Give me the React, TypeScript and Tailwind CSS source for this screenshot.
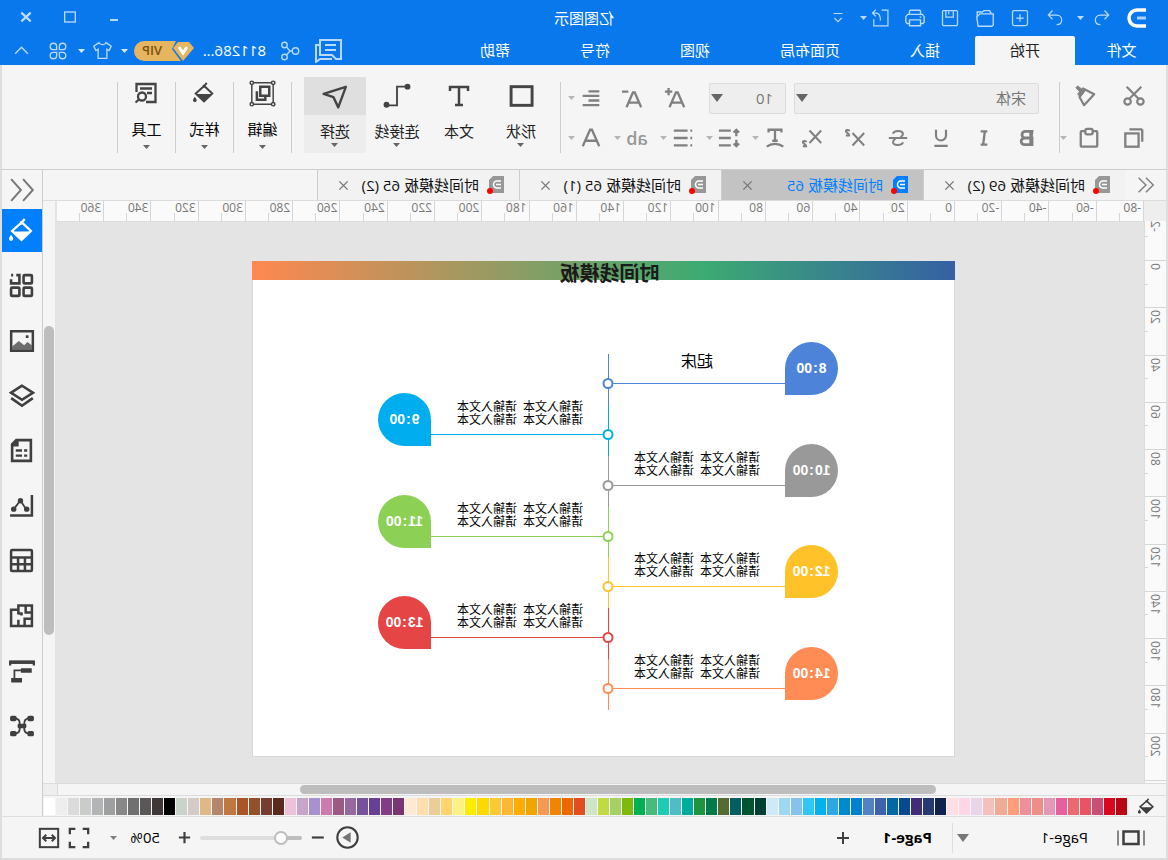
import { useState } from 'react';
import type { ReactNode } from 'react';

interface IconProps {
  size?: number;
  stroke?: number;
  className?: string;
  children: ReactNode;
}

function Icon({ size = 20, stroke = 1.5, className = '', children }: IconProps) {
  return (
    <svg
      width={size}
      height={size}
      viewBox="0 0 24 24"
      fill="none"
      stroke="currentColor"
      strokeWidth={stroke}
      className={`shrink-0 ${className}`}
      aria-hidden="true"
    >
      {children}
    </svg>
  );
}

function Caret({ className = '', big = false }: { className?: string; big?: boolean }) {
  return (
    <svg width={big ? 12 : 7} height={big ? 8 : 4} viewBox="0 0 12 8" preserveAspectRatio="none" className={`shrink-0 ${className}`} aria-hidden="true">
      <path d="M0 0h12L6 8z" fill="currentColor" />
    </svg>
  );
}

const FillIcon = ({ size = 22, className = '' }: { size?: number; className?: string }) => (
  <Icon size={size} stroke={2.2} className={className}>
    <path d="M9 1l4 5M12 4L3 12.500 12 21 21 12.500 11 3.500z" />
    <path d="M3.500 13h17L12 21.500z" fill="currentColor" stroke="none" />
    <path d="M22 16c1.500 2 2 3 2 4a2 2 0 01-4 0c0-1 .5-2 2-4z" fill="currentColor" stroke="none" />
  </Icon>
);

const quickIcons = [
  {
    label: '新建',
    icon: (
      <Icon>
        <rect x="3" y="3" width="18" height="18" rx="2" />
        <path d="M12 7.500v9M7.500 12h9" />
      </Icon>
    ),
  },
  {
    label: '打开',
    icon: (
      <Icon size={22}>
        <path d="M3 7.500h14.500L21 11l-1.500 10H4.500L3 19.500zM5 7.500l2-3.500h6l2 1.500h5.500V10" />
      </Icon>
    ),
  },
  {
    label: '保存',
    icon: (
      <Icon>
        <path d="M4 3h16l1 1v16l-1 1H4l-1-1V4zM8 3v8h9V3M13.500 4.500v3" />
      </Icon>
    ),
  },
  {
    label: '打印',
    icon: (
      <Icon size={22}>
        <path d="M6 8V4.500L7 3.500h10l1 1V8M6 18H3.500L2 16.500v-6L4 8h16l2 2.500v6L20.500 18H18M6 14h12v6.500H6zM5 11h2" />
      </Icon>
    ),
  },
  {
    label: '导出',
    icon: (
      <Icon>
        <path d="M10 2.500H2.500v19h17v-8M20.500 6h-4c-4 0-5 4-5 9M17 2l4 4-4 4" />
      </Icon>
    ),
  },
];

const menus = ['插入', '页面布局', '视图', '符号', '帮助'];

function TitleBar() {
  const light = 'flex items-center justify-center text-[#b9d9ff]';
  return (
    <header className="bg-[#0878ec] text-white">
      <div className="flex h-9 items-center">
        <div className="flex flex-1 items-center pl-1">
          <span className="flex w-11 justify-center pl-2.5">
            <svg width="20" height="20" viewBox="0 0 20 20" fill="none" aria-hidden="true">
              <path d="M1 2h9a8 8 0 010 16H1" stroke="#fff" strokeWidth="3.500" />
              <path d="M1 10h9" stroke="#a9d0ff" strokeWidth="3" />
            </svg>
          </span>
          <button type="button" aria-label="撤销" className={`${light} w-9`}>
            <Icon>
              <path d="M9 3L4 8.500l5 5M4 8.500h10c4 0 6 3 6 6s-2 5.500-6 5.500" />
            </Icon>
          </button>
          <Caret className="mr-1 text-[#b9d9ff]" />
          <button type="button" aria-label="重做" className={`${light} w-[35px]`}>
            <Icon>
              <path d="M15 3l5 5.500-5 5M20 8.500H10c-4 0-6 3-6 6S6 20 10 20" />
            </Icon>
          </button>
          {quickIcons.map((item) => (
            <button key={item.label} type="button" aria-label={item.label} className={`${light} w-[35px]`}>
              {item.icon}
            </button>
          ))}
          <Caret className="-ml-1 text-[#b9d9ff]" />
          <button type="button" aria-label="自定义" className={`${light} ml-1 w-9`}>
            <Icon size={18}>
              <path d="M6 6h12M7 12l5 5 5-5" />
            </Icon>
          </button>
        </div>
        <h1 className="text-[15px]">亿图图示</h1>
        <div className="flex flex-1 justify-end pr-1">
          <button type="button" aria-label="最小化" className={`${light} w-11`}>
            <Icon size={16} stroke={3}>
              <path d="M6 15h12" />
            </Icon>
          </button>
          <button type="button" aria-label="最大化" className={`${light} w-11`}>
            <Icon size={16} stroke={2}>
              <rect x="4" y="3" width="16" height="15" />
            </Icon>
          </button>
          <button type="button" aria-label="关闭" className={`${light} w-11`}>
            <Icon size={16} stroke={3.5}>
              <path d="M5 4l14 13M19 4L5 17" />
            </Icon>
          </button>
        </div>
      </div>
      <div className="flex h-[29px] items-stretch text-[15px]">
        <button type="button" className="w-[93px]">文件</button>
        <button type="button" className="rounded-t-xs bg-[#f5f5f5] px-[35px] text-[#222]">开始</button>
        {menus.map((menu) => (
          <button key={menu} type="button" className="px-[35px]">
            {menu}
          </button>
        ))}
        <div className="ml-auto flex items-center pr-2.5">
          <button type="button" aria-label="消息" className={`${light} w-10`}>
            <svg width="28" height="24" viewBox="0 0 28 24" fill="none" stroke="currentColor" strokeWidth="2" aria-hidden="true">
              <path d="M1 1h21v15H10l-4 4H1zM6 6h11M6 11h11" />
              <path d="M22 6h4v17l-4-3H10" />
            </svg>
          </button>
          <button type="button" aria-label="分享" className={`${light} w-9`}>
            <Icon size={22}>
              <circle cx="6" cy="12" r="3.500" />
              <circle cx="18" cy="5.500" r="3" />
              <circle cx="18" cy="18.500" r="3" />
              <path d="M9 12h3l4-4.500M12 12l4 4.500" />
            </Icon>
          </button>
          <span className="ml-1.5 w-[72px]">811286...</span>
          <span className="relative flex h-5 w-[60px] items-center justify-end">
            <svg width="60" height="20" viewBox="0 0 60 20" className="absolute inset-0" aria-hidden="true">
              <path d="M18 0h32a10 10 0 010 20H13l9-12z" fill="#e5b560" />
              <path d="M5 1h11l5 6-10 13L0 7z" fill="#e5b560" />
              <path d="M7 6l4 6 4-6" fill="none" stroke="#fff" strokeWidth="3" />
            </svg>
            <span className="relative mr-2 text-[13px] font-semibold text-[#7a5210]">VIP</span>
          </span>
          <Caret className="ml-1.5 text-[#d5e8ff]" />
          <button type="button" aria-label="皮肤" className={`${light} w-9`}>
            <Icon size={21}>
              <path d="M8 3L2 7l2.500 5L7 10.500V21h10V10.500l2.500 1.500L22 7l-6-4c-1 3-7 3-8 0z" />
            </Icon>
          </button>
          <Caret className="text-[#d5e8ff]" />
          <button type="button" aria-label="应用" className={`${light} w-10`}>
            <Icon size={22}>
              <path d="M10.500 10.500H7A3.500 3.500 0 1110.500 7zM13.500 10.500V7A3.500 3.500 0 1117 10.500zM10.500 13.500V17A3.500 3.500 0 117 13.500zM13.500 13.500H17A3.500 3.500 0 1113.500 17z" />
            </Icon>
          </button>
          <button type="button" aria-label="收起" className={`${light} ml-1 w-6`}>
            <Icon size={19} stroke={1.8}>
              <path d="M4 16l8-8 8 8" />
            </Icon>
          </button>
        </div>
      </div>
    </header>
  );
}

const Divider = () => <span className="mt-[17px] h-[71px] w-px shrink-0 bg-[#cdcdcd]" />;

const formatButtons = [
  { label: '加粗', stroke: 3.4, icon: <path d="M6 4h8a4 4 0 010 8H7zM6 12h9a4 4 0 010 8H6zM7.500 4v16" /> },
  { label: '斜体', stroke: 2.8, icon: <path d="M8 4h8M8 20h8M11 4l2 16" /> },
  { label: '下划线', stroke: 2.6, icon: <path d="M6 2v7a6 6 0 0012 0V2M4 21.500h16" /> },
  { label: '删除线', stroke: 2.4, icon: <path d="M18 7c-1-4-11-5-12 0 0 2 1 3 3 4M6 17c1 4 12 5 12 0 0-2-1-3-3-4M1 12h22" /> },
  { label: '上标', stroke: 2.4, icon: <path d="M1 6l14 15M15 6L1 21M19 4c0-2 4-2 4 0s-4 2-4 5h4" /> },
  { label: '下标', stroke: 2.4, icon: <path d="M1 3l14 15M15 3L1 18M19 17c0-2 4-2 4 0s-4 2-4 5h4" /> },
];

const paragraphButtons = [
  { label: '文字方向', icon: <path d="M5 6V3h14v3M12 3v12M9 15h6M3 21.500c5-4 13-4 18 0" /> },
  { label: '行距', icon: <path d="M4 3v7M1 6l3-3 3 3M4 14v7M1 18l3 3 3-3M10 4h13M10 12h13M10 20h13" /> },
  { label: '项目符号', icon: <path d="M2 4h2M2 12h2M2 20h2M7 4h15M7 12h15M7 20h15" /> },
  { label: '突出显示', text: 'ab' },
  { label: '字体颜色', icon: <path d="M3 21L11 3h2l8 18M6 15h12" /> },
];

const bigTools = [
  {
    label: '形状',
    caret: true,
    icon: (
      <Icon size={28} stroke={2.5}>
        <rect x="2.500" y="4" width="18" height="16" />
      </Icon>
    ),
  },
  {
    label: '文本',
    caret: false,
    icon: (
      <Icon size={24} stroke={2.5}>
        <path d="M3 7V3h18v4M12 3v18M8 21h8" />
      </Icon>
    ),
  },
  {
    label: '连接线',
    caret: true,
    icon: (
      <Icon size={28} stroke={1.6}>
        <path d="M3 4h9v16h9" />
        <circle cx="3" cy="4" r="2.500" fill="currentColor" stroke="none" />
        <circle cx="21" cy="19.500" r="2.500" fill="currentColor" stroke="none" />
      </Icon>
    ),
  },
  {
    label: '选择',
    caret: true,
    active: true,
    icon: (
      <Icon size={26} stroke={2.2}>
        <path d="M2 3.500L22.500 10l-9 3L9 22.500z" strokeLinejoin="round" />
      </Icon>
    ),
  },
];

const smallTools = [
  {
    label: '编辑',
    icon: (
      <Icon size={27} stroke={1.3}>
        <path d="M2.500 2.500h19v19h-19z" />
        <path d="M6 6h8v8H6zM17 10v7.500H9.500V14" strokeWidth="2.200" />
        <g fill="#f5f5f5">
          <circle cx="2.500" cy="2.500" r="1.500" />
          <circle cx="21.500" cy="2.500" r="1.500" />
          <circle cx="2.500" cy="21.500" r="1.500" />
          <circle cx="21.500" cy="21.500" r="1.500" />
        </g>
      </Icon>
    ),
  },
  { label: '样式', icon: <FillIcon size={22} /> },
  {
    label: '工具',
    icon: (
      <Icon size={24} stroke={2.3}>
        <path d="M21.500 11V3h-19v18H12M6 7.500h12M6 12h5" />
        <circle cx="16" cy="15.500" r="4" />
        <path d="M19 18.500l3.500 3" />
      </Icon>
    ),
  },
];

function Ribbon() {
  const [font, setFont] = useState('宋体');
  const [fontSize, setFontSize] = useState('10');
  const btn = 'flex h-8 items-center justify-center';

  return (
    <section className="flex min-h-[105px] items-start border-x-2 border-b border-x-[#dedede] border-b-[#cdcdcd] bg-[#f5f5f5] text-[#444]">
      <div className="mt-[17px] grid grid-cols-[44px_45px_7px] gap-y-2 pl-2.5 text-[#808080]">
        <button type="button" aria-label="剪切" className={btn}>
          <Icon size={22} stroke={2.4} className="-mt-1">
            <circle cx="5" cy="18" r="3.500" />
            <circle cx="19" cy="18" r="3.500" />
            <path d="M4 2l13 13M20 2L7 15" />
          </Icon>
        </button>
        <button type="button" aria-label="格式刷" className={`${btn} pl-2`}>
          <Icon size={22} stroke={2.4} className="-mt-1">
            <path d="M2 10l10-5 6 8-5 9z" strokeLinejoin="round" />
            <path d="M11 5l6 8 3-3-2-3 4-4-2-2-4 3-2-1z" fill="currentColor" strokeWidth="1" />
          </Icon>
        </button>
        <span />
        <button type="button" aria-label="复制" className={btn}>
          <Icon size={22} stroke={2.5}>
            <path d="M17 2.500H3M3 2.500V16" />
            <rect x="7" y="7" width="14.500" height="14.500" />
          </Icon>
        </button>
        <button type="button" aria-label="粘贴" className={btn}>
          <Icon size={22} stroke={2.5}>
            <rect x="3" y="4.500" width="18" height="17" rx="1" />
            <rect x="8" y="2" width="8" height="6" rx="2" fill="#f5f5f5" />
          </Icon>
        </button>
        <span className="flex items-center text-[#b5b5b5]"><Caret /></span>
      </div>
      <Divider />

      <div className="mt-[17px] flex flex-col gap-2 pl-2.5 text-[#808080]">
        <div className="flex items-center pl-2.5">
          <label className="relative mr-2 flex items-center">
            <select
              aria-label="字体"
              value={font}
              onChange={(e) => setFont(e.target.value)}
              className="h-[31px] w-[245px] appearance-none rounded-xs border border-[#dcdcdf] bg-[#eee] px-3 text-[15px] text-[#777]"
            >
              <option>宋体</option>
              <option>黑体</option>
            </select>
            <Caret big className="pointer-events-none absolute right-0.5 text-[#666]" />
          </label>
          <label className="relative flex items-center">
            <select
              aria-label="字号"
              value={fontSize}
              onChange={(e) => setFontSize(e.target.value)}
              className="h-[31px] w-[77px] appearance-none rounded-xs border border-[#dcdcdf] bg-[#eee] px-3 text-[15px] text-[#777]"
            >
              <option>10</option>
              <option>12</option>
            </select>
            <Caret big className="pointer-events-none absolute right-0.5 text-[#666]" />
          </label>
          <button type="button" aria-label="增大字号" className={`${btn} ml-3 w-[43px]`}>
            <Icon size={22} stroke={2.5}>
              <path d="M2 22L9 6h2l7 16M5 17h10M19 1v8M15 5h8" />
            </Icon>
          </button>
          <button type="button" aria-label="减小字号" className={`${btn} w-[43px]`}>
            <Icon size={22} stroke={2.5}>
              <path d="M2 22L9 6h2l7 16M5 17h10M16 5h7" />
            </Icon>
          </button>
          <button type="button" aria-label="对齐" className={`${btn} ml-1 w-8`}>
            <Icon size={20} stroke={2.8}>
              <path d="M2 4h13M2 9.500h20M2 15h13M2 20.500h20" />
            </Icon>
          </button>
          <Caret className="text-[#b5b5b5]" />
        </div>
        <div className="flex items-center">
          {formatButtons.map((b) => (
            <button key={b.label} type="button" aria-label={b.label} className={`${btn} w-[43px]`}>
              <Icon size={20} stroke={b.stroke}>{b.icon}</Icon>
            </button>
          ))}
          {paragraphButtons.map((b) => (
            <div key={b.label} className="flex w-[46px] items-center">
              <button type="button" aria-label={b.label} className={`${btn} w-8`}>
                {b.text ? (
                  <span className="text-lg font-semibold text-[#999]">{b.text}</span>
                ) : (
                  <Icon size={22} stroke={2.5}>{b.icon}</Icon>
                )}
              </button>
              <Caret className="text-[#b5b5b5]" />
            </div>
          ))}
        </div>
      </div>
      <Divider />

      <div className="mt-3 ml-2 flex">
        {bigTools.map((tool) => (
          <button
            key={tool.label}
            type="button"
            className={`flex h-[76px] w-[62px] flex-col items-center rounded-xs text-[15px] ${tool.active ? 'bg-[#ededed]' : ''}`}
          >
            <span className={`flex h-[38px] w-full shrink-0 items-center justify-center ${tool.active ? 'bg-[#dfdfdf]' : ''}`}>
              {tool.icon}
            </span>
            <span className="mt-1 leading-6 text-[#222]">{tool.label}</span>
            {tool.caret && <Caret className="text-[#666]" />}
          </button>
        ))}
      </div>
      <span className="w-3" />
      <Divider />
      {smallTools.map((tool) => (
        <div key={tool.label} className="flex items-start">
          <button type="button" className="mt-3 flex h-[76px] w-[57px] flex-col items-center text-[15px]">
            <span className="flex h-8 shrink-0 items-center justify-center">{tool.icon}</span>
            <span className="mt-2 leading-6 text-black">{tool.label}</span>
            <Caret className="mt-1 text-[#666]" />
          </button>
          <Divider />
        </div>
      ))}
    </section>
  );
}

const initialDocs = [
  { id: 1, name: '时间线模板 69 (2)' },
  { id: 2, name: '时间线模板 65' },
  { id: 3, name: '时间线模板 65 (1)' },
  { id: 4, name: '时间线模板 65 (2)' },
];

function DocTabs() {
  const [active, setActive] = useState(2);

  return (
    <nav className="flex h-[31px] border-b border-[#dcdcdc] bg-[#f5f5f5]">
      <button type="button" aria-label="上一个" className="flex w-[41px] items-center justify-center text-[#808080]">
        <Icon size={22} stroke={1.6}>
          <path d="M11 4l-8 8 8 8M19 4l-8 8 8 8" />
        </Icon>
      </button>
      {initialDocs.map((doc) => {
        const isActive = doc.id === active;
        return (
          <div
            key={doc.id}
            className={`flex w-[202px] items-center border-r border-[#cdcdcd] pr-5 pl-3.5 ${isActive ? 'bg-[#c3c3c3]' : 'bg-[#f2f2f2]'}`}
          >
            <button type="button" onClick={() => setActive(doc.id)} className="flex items-center gap-2 text-[15px]">
              <svg width="18" height="18" viewBox="0 0 18 18" className={isActive ? 'text-[#0080ff]' : 'text-[#979797]'} aria-hidden="true">
                <path d="M1 0h11l4 4v13H1z" fill="currentColor" />
                <path d="M4 5h4a3.500 3.500 0 010 7H4M4 8.500h5" fill="none" stroke="#fff" strokeWidth="1.500" />
                <circle cx="15" cy="15" r="3" fill="#f00" />
              </svg>
              <span className={isActive ? 'text-[#0080ff]' : 'text-[#111]'}>{doc.name}</span>
            </button>
            <button type="button" aria-label="关闭标签" className="ml-auto text-[#777]">
              <Icon size={11} stroke={3}>
                <path d="M3 3l18 18M21 3L3 21" />
              </Icon>
            </button>
          </div>
        );
      })}
    </nav>
  );
}

const horizontalMarks = Array.from({ length: 23 }, (_, i) => -80 + i * 20);
const verticalMarks = Array.from({ length: 11 }, (_, i) => i * 20);

function HorizontalRuler() {
  return (
    <div className="flex h-[21px] border-b border-[#dcdcdc] bg-[#fafafa]">
      {horizontalMarks.map((mark) => (
        <div key={mark} className="flex flex-1 items-end border-l border-[#d5d5d5]">
          <span className="w-1/2 self-start pl-0.5 text-xs leading-[14px] text-[#777]">{mark}</span>
          <span className="h-2 w-px bg-[#d5d5d5]" />
        </div>
      ))}
    </div>
  );
}

function VerticalRuler() {
  const label = 'rotate-180 text-xs leading-[14px] text-[#777] [writing-mode:vertical-rl]';
  return (
    <div className="flex flex-1 flex-col border-r border-[#dcdcdc] bg-[#fafafa]">
      <div className="flex h-[39px] pl-1">
        <span className={`${label} self-start`}>-2</span>
        <span className="mt-[15px] ml-auto h-px w-2 bg-[#d5d5d5]" />
      </div>
      {verticalMarks.map((mark) => (
        <div key={mark} className="flex flex-1 items-center border-t border-[#d5d5d5] pl-1">
          <span className={`${label} mt-0.5 self-start`}>{mark}</span>
          <span className="ml-auto h-px w-2 bg-[#d5d5d5]" />
        </div>
      ))}
      <div className="h-[3px] border-t border-[#d5d5d5]" />
    </div>
  );
}

const filler = '请输入文本  请输入文本\n请输入文本  请输入文本';

const events = [
  { hour: '8', y: 123, color: '#4d84d9', left: true, text: '起床' },
  { hour: '9', y: 174, color: '#00aeef', left: false, text: filler },
  { hour: '10', y: 225, color: '#999999', left: true, text: filler },
  { hour: '11', y: 276, color: '#8cd055', left: false, text: filler },
  { hour: '12', y: 326, color: '#ffc228', left: true, text: filler },
  { hour: '13', y: 377, color: '#e54545', left: false, text: filler },
  { hour: '14', y: 428, color: '#ff8c55', left: true, text: filler },
];

function TimelinePage() {
  return (
    <div className="relative mt-[39px] ml-[189px] h-[496px] w-[703px] border border-t-0 border-[#d8d8d8] bg-white">
      <div className="-mx-px flex h-[19px] justify-center bg-[linear-gradient(to_right,#3560a4,#3cab72_36%,#ff8850)] pr-3">
        <h2 className="text-xl leading-[26px] font-bold text-[#1a1a1a]">时间线模板</h2>
      </div>
      <svg width="702" height="495" viewBox="0 0 702 495" className="absolute inset-0" fill="none" aria-hidden="true">
        {events.map(({ hour, y, color, left }) => (
          <g key={hour} stroke={color}>
            <path d={`M345.500 ${y - 30}v51`} />
            <path d={left ? `M169 ${y - 0.5}h172` : `M350 ${y - 0.5}h173`} />
            <path
              d={
                left
                  ? `M142.500 ${y - 42}a26.500 26.500 0 000 53h26.500v-26.500a26.500 26.500 0 00-26.500-26.500z`
                  : `M549.500 ${y - 42}a26.500 26.500 0 010 53h-26.500v-26.500a26.500 26.500 0 0126.500-26.500z`
              }
              fill={color}
              stroke="none"
            />
          </g>
        ))}
        {events.map(({ hour, y, color }) => (
          <circle key={hour} cx="346" cy={y - 0.5} r="4.500" fill="#fff" stroke={color} strokeWidth="2" />
        ))}
      </svg>
      {events.map(({ hour, y, left, text }) => (
        <div key={hour}>
          <span
            className={`absolute flex h-[51px] w-[53px] items-center justify-center font-[Liberation_Sans] text-sm font-bold text-white ${left ? 'left-[116px]' : 'left-[523px]'}`}
            style={{ top: y - 42 }}
          >
            {hour}<span className="px-px">:</span>00
          </span>
          <p
            className={`absolute flex w-[128px] items-center justify-center whitespace-pre text-black ${left ? 'left-[193px]' : 'left-[370px]'} ${text === filler ? 'h-[26px] text-xs leading-[13px]' : 'h-6 text-base leading-6'}`}
            style={{ top: y - 35 }}
          >
            {text}
          </p>
        </div>
      ))}
    </div>
  );
}

const sideIcons = [
  {
    label: '符号库',
    icon: (
      <Icon size={25} stroke={2.5}>
        <rect x="2" y="2" width="8" height="8" rx="1" />
        <rect x="2" y="14" width="8" height="8" rx="1" />
        <rect x="14" y="14" width="8" height="8" rx="1" />
        <path d="M17 2h-3v8h8V6M20 2h2" />
      </Icon>
    ),
  },
  {
    label: '图片',
    icon: (
      <Icon size={26} stroke={2.3}>
        <rect x="2" y="3" width="20" height="18" />
        <path d="M3 20v-4l4-3 3 3 5-4 6 5v3z" fill="currentColor" stroke="none" opacity=".75" />
        <path d="M6 8h2.500" strokeWidth="2.500" />
      </Icon>
    ),
  },
  {
    label: '图层',
    icon: (
      <Icon size={26} stroke={2.4}>
        <path d="M12 2.500L22 9l-10 6.500L2 9z" />
        <path d="M2 14l10 7 10-7" />
      </Icon>
    ),
  },
  {
    label: '文档',
    icon: (
      <Icon size={25} stroke={2.5}>
        <path d="M3 2h14l4 4v16H3z" />
        <path d="M16 2v5h5" fill="currentColor" />
        <path d="M6.500 12h3M11.500 12h6M6.500 17h3M11.500 17h6" strokeWidth="2.200" />
      </Icon>
    ),
  },
  {
    label: '图表',
    icon: (
      <Icon size={25} stroke={1.8}>
        <path d="M2 2v19.500h21" strokeWidth="2.400" />
        <path d="M8 15l5-8 6 8" />
        <g fill="currentColor" stroke="none">
          <circle cx="7" cy="15.500" r="2.600" />
          <circle cx="13" cy="7.500" r="2.600" />
          <circle cx="19.500" cy="15.500" r="2.600" />
        </g>
      </Icon>
    ),
  },
  {
    label: '表格',
    icon: (
      <Icon size={25} stroke={2.4}>
        <rect x="2" y="2" width="20" height="20" rx="1" />
        <path d="M2 9h20M2 15.500h20M8.700 9v13M15.300 9v13" />
      </Icon>
    ),
  },
  {
    label: '平面图',
    icon: (
      <Icon size={25} stroke={2.4}>
        <path d="M2 2.500h13v4h7V22H2zM2 9h6V2.500M2 15h7v7M15 6v5M15 22v-6M12 12v-2h3" />
      </Icon>
    ),
  },
  {
    label: '甘特图',
    icon: (
      <Icon size={26} stroke={1.6}>
        <path d="M1 7V3.500h22V7" strokeWidth="2.200" />
        <path d="M1 4h22" strokeWidth="3" />
        <path d="M3 11.500h10M12 20.500h10" strokeWidth="4" />
        <path d="M12 11.500h7v8" />
      </Icon>
    ),
  },
  {
    label: '思维导图',
    icon: (
      <Icon size={26} stroke={1.7}>
        <path d="M5 5c5 0 5 3 5 7s0 7-5 7M19 5c-5 0-5 3-5 7s0 7 5 7" />
        <g fill="currentColor" stroke="none">
          <rect x="1" y="2.500" width="6" height="5" rx="1.500" />
          <rect x="17" y="2.500" width="6" height="5" rx="1.500" />
          <rect x="1" y="16.500" width="6" height="5" rx="1.500" />
          <rect x="17" y="16.500" width="6" height="5" rx="1.500" />
          <rect x="8" y="10" width="8" height="4" rx="1" />
        </g>
      </Icon>
    ),
  },
];

function SideBar() {
  return (
    <aside className="flex w-[41px] shrink-0 flex-col border-l border-[#cdcdcd] bg-[#f5f5f5] text-[#3f3f3f]">
      <button type="button" aria-label="展开" className="flex h-[39px] items-center justify-center text-[#777]">
        <Icon size={26} stroke={1.8}>
          <path d="M11 2L2 12l9 10M22 2l-9 10 9 10" />
        </Icon>
      </button>
      <button type="button" aria-label="填充" className="mb-1.5 flex h-[43px] items-center justify-center bg-[#0080ff] text-white">
        <FillIcon size={25} />
      </button>
      {sideIcons.map((item) => (
        <button key={item.label} type="button" aria-label={item.label} className="flex h-[55px] items-center justify-center">
          {item.icon}
        </button>
      ))}
    </aside>
  );
}

const swatches = (
  'b90615 d9081e c84f78 e85464 ea6a70 e75f9f e298b6 ee8e86 ef8f9a ff9e78 efab94 f5bfbc e8d5e8 ffd6e6 ffdfe4 ' +
  '10234e 253a72 412c78 084a90 0468a4 3e63ae 5382c4 0080d0 008acc 2da8e1 00b3ef 2fc7f8 88c1ec 9ed7ef ceeaf6 ' +
  '004032 005530 006060 556b2f 007a48 1f9440 00ad9c 50bdc4 1ccdb4 48bb7c 00b052 7fb90e a5d065 bfda42 cde6c8 ' +
  'e04e20 ee6800 f28500 f49a55 f2a400 ffae00 ffb733 fbc934 ffd900 ffec00 fcf284 ffd46f ebcd99 fedeae fee9d2 ' +
  '7a3474 823e85 683f96 755299 97689f 9c5986 cb7bae a891cf c6a5c8 ecc1da 5c2a1c 773c30 944f2b a95527 c07740 ' +
  'b4866c deb887 d5cbc6 c9d3ca 000000 3f3836 5a5757 707070 888888 9ea0a0 b2b5b5 caccca dbdbdb eeeeee ffffff'
).split(' ');

function ColorBar() {
  return (
    <div className="flex h-5 items-center bg-[#f5f5f5]">
      <span className="flex w-[39px] shrink-0 justify-center text-[#3f3f3f]">
        <FillIcon size={17} />
      </span>
      <div className="mr-px flex h-[17px] flex-1 gap-px">
        {swatches.map((hex) => (
          <button key={hex} type="button" aria-label={`#${hex}`} className="min-w-0 flex-1" style={{ backgroundColor: `#${hex}` }} />
        ))}
      </div>
    </div>
  );
}

function StatusBar() {
  const [zoom, setZoom] = useState(16);

  return (
    <footer className="flex h-11 items-center border-x-2 border-t border-b-2 border-[#dedede] bg-[#f5f5f5] text-[15px] text-[#3f3f3f]">
      <button type="button" aria-label="页面视图" className="ml-5">
        <svg width="30" height="18" viewBox="0 0 30 18" fill="none" stroke="currentColor" aria-hidden="true">
          <rect x="7.500" y="2.500" width="15" height="12.500" strokeWidth="2.500" />
          <path d="M2 1.500v15M28 1.500v15" strokeWidth="2" opacity=".6" />
        </svg>
      </button>
      <label className="relative ml-7 flex items-center">
        <select aria-label="页面" className="w-[133px] appearance-none text-[15px] text-black">
          <option>Page-1</option>
        </select>
        <Caret big className="pointer-events-none absolute right-0.5 text-[#777]" />
      </label>
      <span className="mx-0.5 h-[30px] w-px bg-[#dedede]" />
      <button type="button" className="ml-[18px] font-bold text-black">Page-1</button>
      <button type="button" aria-label="新增页面" className="ml-8">
        <Icon size={16} stroke={3}>
          <path d="M12 3v18M3 12h18" />
        </Icon>
      </button>

      <div className="ml-auto flex items-center">
        <button type="button" aria-label="放映">
          <Icon size={25} stroke={2}>
            <circle cx="12" cy="12" r="9.800" />
            <path d="M9 7l8 5-8 5z" fill="currentColor" stroke="none" opacity=".7" />
          </Icon>
        </button>
        <button type="button" aria-label="缩小" className="mr-2 ml-2.5">
          <Icon size={15} stroke={3.5}>
            <path d="M2 12h19" />
          </Icon>
        </button>
        <input
          type="range"
          aria-label="缩放"
          min={0}
          max={100}
          value={zoom}
          onChange={(e) => setZoom(Number(e.target.value))}
          className="h-1 w-[102px] appearance-none rounded-full bg-[linear-gradient(to_right,#bdbdbd_16%,#dedede_16%)] [&::-webkit-slider-thumb]:h-3.5 [&::-webkit-slider-thumb]:w-3.5 [&::-webkit-slider-thumb]:appearance-none [&::-webkit-slider-thumb]:rounded-full [&::-webkit-slider-thumb]:border-2 [&::-webkit-slider-thumb]:border-[#bdbdbd] [&::-webkit-slider-thumb]:bg-white"
        />
        <button type="button" aria-label="放大" className="ml-2">
          <Icon size={15} stroke={3.5}>
            <path d="M12 3v18M3 12h18" />
          </Icon>
        </button>
        <button type="button" className="ml-[17px] flex items-center text-black">
          <span className="w-[43px] text-left">50%</span>
          <Caret className="text-[#808080]" />
        </button>
        <button type="button" aria-label="全屏" className="ml-5">
          <Icon size={22} stroke={2.5}>
            <path d="M2 8V2h6M16 2h6v6M22 16v6h-6M8 22H2v-6" />
          </Icon>
        </button>
        <button type="button" aria-label="适应宽度" className="mr-9 ml-2">
          <Icon size={22} stroke={2.2}>
            <rect x="2" y="2" width="20" height="20" />
            <path d="M6 12h12M9 8.500L5.500 12 9 15.500M15 8.500l3.500 3.500-3.500 3.500" />
          </Icon>
        </button>
      </div>
    </footer>
  );
}

export default function App() {
  return (
    <div className="flex min-h-screen -scale-x-100 flex-col overflow-hidden bg-[#f5f5f5] font-['Open_Sans','Noto_Sans_CJK_SC',sans-serif]">
      <TitleBar />
      <Ribbon />
      <div className="flex flex-1 border-x-2 border-[#dedede]">
        <main className="flex min-w-0 flex-1 flex-col">
          <DocTabs />
          <div className="flex flex-1">
            <div className="flex w-[22px] shrink-0 flex-col">
              <div className="h-5 bg-[#eee]" />
              <VerticalRuler />
            </div>
            <div className="flex min-w-0 flex-1 flex-col bg-[#e4e4e4]">
              <div className="mr-0.5">
                <HorizontalRuler />
              </div>
              <TimelinePage />
            </div>
            <div className="w-3 shrink-0 bg-[#f5f5f5] px-px pt-[125px]">
              <div className="h-[309px] rounded-full bg-[#bdbdbd]" />
            </div>
          </div>
          <div className="flex h-[13px] border-y border-[#dcdcdc]">
            <div className="flex flex-1 items-center border-r border-[#dcdcdc] bg-[#f5f5f5] pl-[230px]">
              <div className="h-[9px] w-[636px] rounded-full bg-[#bdbdbd]" />
            </div>
            <div className="w-3.5 bg-[#eee]" />
          </div>
          <ColorBar />
        </main>
        <SideBar />
      </div>
      <StatusBar />
    </div>
  );
}
